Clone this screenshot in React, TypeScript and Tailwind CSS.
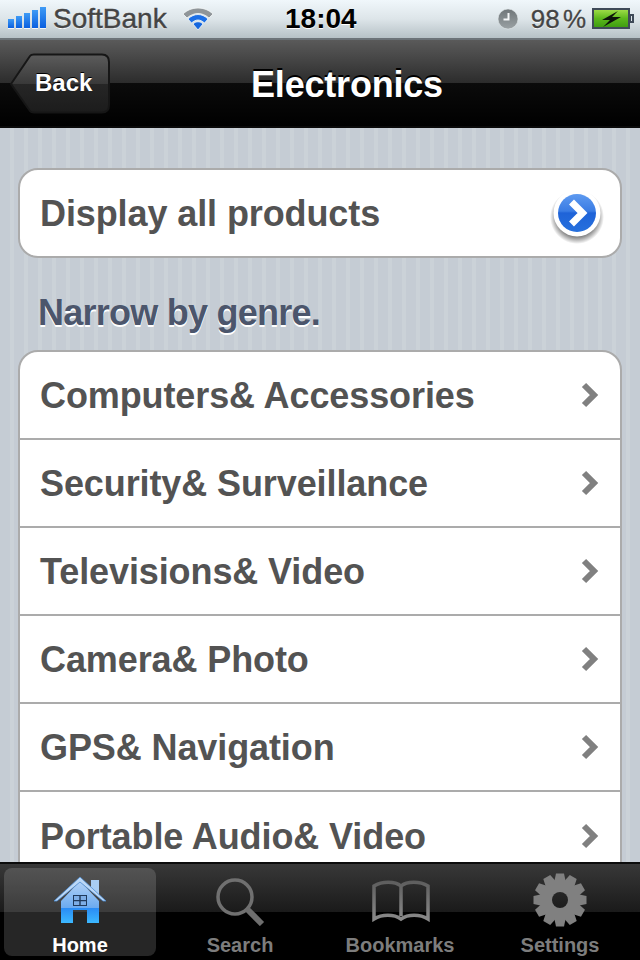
const genres = [
  "Computers& Accessories",
  "Security& Surveillance",
  "Televisions& Video",
  "Camera& Photo",
  "GPS& Navigation",
  "Portable Audio& Video",
];

const SignalBars = () => (
  <svg width="40" height="24" viewBox="0 0 40 24" className="mr-[5px]">
    <defs>
      <linearGradient id="sig" x1="0" y1="0" x2="0" y2="1">
        <stop offset="0" stopColor="#3f9bf5" />
        <stop offset="1" stopColor="#0a5fe0" />
      </linearGradient>
    </defs>
    {[
      [0, 12],
      [8, 9],
      [16, 6],
      [24, 3],
      [32, 0],
    ].map(([x, y]) => (
      <g key={x}>
        <rect x={x} y={y + 1} width="6" height={21 - y} fill="#fff" opacity="0.8" />
        <rect x={x} y={y} width="6" height={21 - y} fill="url(#sig)" />
      </g>
    ))}
  </svg>
);

const Wifi = () => (
  <svg width="32" height="26" viewBox="0 0 32 26">
    <path d="M1 8 C9 0 23 0 31 8 L27 12 C20 6 12 6 5 12 Z" fill="#8f9599" stroke="#f4f7f8" strokeWidth="0.8" />
    <path d="M6 13 C12 7 20 7 26 13 L22.5 17 C18 13 14 13 9.5 17 Z" fill="#1c6fe6" stroke="#f4f7f8" strokeWidth="0.8" />
    <path d="M11 18 C14 15 18 15 21 18 L16 24 Z" fill="#1566de" stroke="#f4f7f8" strokeWidth="0.8" />
  </svg>
);

const Clock = () => (
  <svg width="22" height="22" viewBox="0 0 22 22">
    <defs>
      <linearGradient id="clk" x1="0" y1="0" x2="0" y2="1">
        <stop offset="0" stopColor="#6f7679" />
        <stop offset="1" stopColor="#9aa1a4" />
      </linearGradient>
    </defs>
    <circle cx="11" cy="11" r="10" fill="url(#clk)" stroke="#dfe5e7" strokeWidth="0.6" />
    <path d="M11.5 5 V11.5 H6.5" fill="none" stroke="#f4f6f7" strokeWidth="2" />
  </svg>
);

const Battery = () => (
  <svg width="44" height="22" viewBox="0 0 44 22">
    <defs>
      <linearGradient id="bat" x1="0" y1="0" x2="0" y2="1">
        <stop offset="0" stopColor="#a4e04c" />
        <stop offset="0.5" stopColor="#5cb81c" />
        <stop offset="1" stopColor="#3c9a10" />
      </linearGradient>
    </defs>
    <rect x="1" y="1" width="36" height="19" fill="url(#bat)" stroke="#3f4a58" strokeWidth="2" />
    <path d="M38 6 H42 V15 H38 Z" fill="#3f4a58" />
    <path d="M39 8 H40 V13 H39 Z" fill="#dfe6ea" />
    <path d="M26 3 L10 12 H18 L11 19 L29 9 H20 Z" fill="#0c140a" />
  </svg>
);

const StatusBar = () => (
  <div className="relative h-10 shrink-0 flex items-center border-b-2 border-[#6c7378] bg-[linear-gradient(#f0f7fb,#dde5e9_50%,#b6c1c6)] pl-2 pr-[4px] text-[#444] [text-shadow:0_1px_0_#fff]">
    <SignalBars />
    <span className="mr-[15px] text-[28px] [-webkit-text-stroke:0.4px_#444]">SoftBank</span>
    <Wifi />
    <span className="absolute left-[285px] top-0 h-[38px] text-[28px] leading-[38px] font-bold text-black">18:04</span>
    <div className="ml-auto flex items-center">
      <Clock />
      <span className="ml-[12px] mr-[6px] text-[26px] [word-spacing:-4px] [-webkit-text-stroke:0.3px_#444]">98 %</span>
      <Battery />
    </div>
  </div>
);

const NavBar = () => (
  <div className="relative h-[88px] shrink-0 flex items-center justify-center border-b-2 border-[#0a0a0a] bg-[linear-gradient(#5a5a5a,#2c2c2c_50%,#0b0b0b_50%,#000)] pl-[54px] pt-[3px]">
    <svg width="102" height="62" viewBox="0 0 102 62" className="absolute left-[9px] top-[13px]">
      <defs>
        <linearGradient id="backbtn" x1="0" y1="0" x2="0" y2="1">
          <stop offset="0" stopColor="#5c5c5c" />
          <stop offset="0.5" stopColor="#393939" />
          <stop offset="0.5" stopColor="#262626" />
          <stop offset="1" stopColor="#1c1c1c" />
        </linearGradient>
      </defs>
      <path
        d="M2 31 L21 3 Q22 1.500 25 1.500 H93 Q100 1.500 100 9 V52 Q100 59.500 93 59.500 H25 Q22 59.500 21 58 Z"
        fill="url(#backbtn)"
        stroke="#161616"
        strokeWidth="2"
      />
    </svg>
    <span className="absolute left-[35px] top-[28px] text-2xl leading-[30px] font-bold text-white [text-shadow:0_-1px_0_#000]">Back</span>
    <h1 className="text-[36px] leading-[44px] tracking-[-0.2px] font-bold text-white [text-shadow:0_-2px_0_#000]">Electronics</h1>
  </div>
);

const BlueArrow = () => (
  <svg width="54" height="58" viewBox="0 0 54 58" className="absolute right-[16px] top-[16px]">
    <defs>
      <linearGradient id="blue" x1="0" y1="0" x2="0" y2="1">
        <stop offset="0" stopColor="#5e9af0" />
        <stop offset="0.45" stopColor="#3a7ce4" />
        <stop offset="0.5" stopColor="#1f63d8" />
        <stop offset="1" stopColor="#2670dd" />
      </linearGradient>
      <radialGradient id="blueshadow" cx="0.5" cy="0.5" r="0.5">
        <stop offset="0.7" stopColor="#000" stopOpacity="0.55" />
        <stop offset="1" stopColor="#000" stopOpacity="0" />
      </radialGradient>
    </defs>
    <circle cx="27" cy="31" r="27" fill="url(#blueshadow)" />
    <circle cx="27" cy="27" r="23.500" fill="#fff" />
    <circle cx="27" cy="27" r="19" fill="url(#blue)" />
    <path d="M21.500 16 L32.500 27 L21.500 38" fill="none" stroke="#fff" strokeWidth="7" />
  </svg>
);

const Chevron = () => (
  <svg width="18" height="26" viewBox="0 0 18 26" className="shrink-0 -translate-x-px">
    <path d="M3 3 L13 13 L3 23" fill="none" stroke="#808080" strokeWidth="6" />
  </svg>
);

const House = () => (
  <svg width="54" height="50" viewBox="0 0 54 50">
    <defs>
      <linearGradient id="houseBody" x1="0" y1="0" x2="0" y2="1">
        <stop offset="0" stopColor="#b4d2f5" />
        <stop offset="0.65" stopColor="#6aaaf0" />
        <stop offset="0.65" stopColor="#2a8cf5" />
        <stop offset="1" stopColor="#3cb8ff" />
      </linearGradient>
    </defs>
    <path d="M38 5 H46 V20 L38 14 Z" fill="#a9cdf2" />
    <path d="M8 26 L27 6 L46 26 V48 H34 V35 H20 V48 H8 Z" fill="url(#houseBody)" />
    <path d="M1 26 L27 2 L53 26 H50 L27 7 L4 26 Z" fill="#bcd8f6" stroke="#4f8fd6" strokeWidth="0.8" />
    <rect x="20" y="20" width="14" height="11" fill="#203a5c" />
    <path d="M21 21 H26.300 V25 H21 Z M27.700 21 H33 V25 H27.700 Z M21 26.300 H26.300 V30 H21 Z M27.700 26.300 H33 V30 H27.700 Z" fill="#7eaee6" />
  </svg>
);

const Magnifier = () => (
  <svg width="54" height="52" viewBox="0 0 54 52">
    <circle cx="22" cy="23" r="17" fill="none" stroke="#707070" strokeWidth="3.500" />
    <path d="M34 35 L49 50" fill="none" stroke="#6e6e6e" strokeWidth="6" />
  </svg>
);

const Book = () => (
  <svg width="58" height="44" viewBox="0 -2 58 44" className="translate-x-px">
    <defs>
      <linearGradient id="bookG" gradientUnits="userSpaceOnUse" x1="0" y1="0" x2="0" y2="40">
        <stop offset="0" stopColor="#5c5c5c" />
        <stop offset="1" stopColor="#8a8a8a" />
      </linearGradient>
    </defs>
    <path
      d="M2 6 C10 1 23 1 29 6 C35 1 48 1 56 6 V39 C48 34 36 34 29 39 C22 34 10 34 2 39 Z M29 6 V36"
      fill="none"
      stroke="url(#bookG)"
      strokeWidth="3.500"
    />
  </svg>
);

const Gear = () => (
  <svg width="54" height="54" viewBox="0 0 54 54">
    <defs>
      <mask id="gearHole">
        <rect width="54" height="54" fill="#fff" />
        <circle cx="27" cy="27" r="8" fill="#000" />
      </mask>
    </defs>
    <g fill="#808080" mask="url(#gearHole)">
      <circle cx="27" cy="27" r="20" />
      {[0, 30, 60, 90, 120, 150, 180, 210, 240, 270, 300, 330].map((a) => (
        <path key={a} d="M23 0.500 H31 L33 10 H21 Z" transform={`rotate(${a} 27 27)`} />
      ))}
    </g>
  </svg>
);

const tabs = [
  { label: "Home", icon: <House />, active: true },
  { label: "Search", icon: <Magnifier /> },
  { label: "Bookmarks", icon: <Book /> },
  { label: "Settings", icon: <Gear /> },
];

const TabBar = () => (
  <div className="h-[98px] shrink-0 grid grid-cols-4 gap-2 border-t-2 border-[#0c0c0c] bg-[linear-gradient(#383838,#1a1a1a_50%,#000_50%,#000)] px-1 pt-1 pb-1">
    {tabs.map((t) => (
      <div
        key={t.label}
        className={`flex flex-col items-center justify-end rounded-lg ${t.active ? "bg-white/15" : ""}`}
      >
        <div className="flex flex-1 items-center justify-center pb-[2px]">{t.icon}</div>
        <span className={`text-xl leading-[22px] font-bold ${t.active ? "text-white" : "text-[#7d7d7d]"}`}>{t.label}</span>
      </div>
    ))}
  </div>
);

export default function App() {
  return (
    <div className="flex h-[960px] w-[640px] flex-col overflow-hidden font-['Liberation_Sans',Arial,sans-serif]">
      <StatusBar />
      <NavBar />
      <main className="min-h-0 flex-1 overflow-hidden bg-[repeating-linear-gradient(90deg,#c5ccd4_0,#c5ccd4_10px,#cbd2d8_10px,#cbd2d8_14px)] px-[18px] pt-10">
        <div className="relative flex h-[90px] items-center rounded-[20px] border-2 border-[#ababab] bg-white pl-5">
          <span className="pt-[2px] text-[36px] font-bold tracking-[-0.1px] text-[#535353]">Display all products</span>
          <BlueArrow />
        </div>
        <h2 className="mt-[34px] mb-[16px] pl-5 text-[36px] leading-[42px] font-bold tracking-[-0.75px] text-[#4c566c] [text-shadow:0_2px_0_#fff]">
          Narrow by genre.
        </h2>
        <ul className="rounded-[20px] border-2 border-[#ababab] bg-white">
          {genres.map((g) => (
            <li
              key={g}
              className="flex h-[88px] items-center justify-between border-b-2 border-[#ababab] pr-5 pl-5 last:border-b-0"
            >
              <span className="pt-[2px] text-[36px] font-bold tracking-[-0.1px] text-[#535353]">{g}</span>
              <Chevron />
            </li>
          ))}
        </ul>
      </main>
      <TabBar />
    </div>
  );
}
